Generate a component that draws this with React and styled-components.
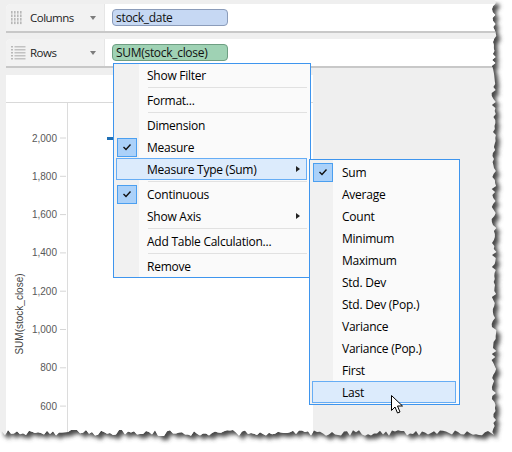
import React from "react";
import styled, { createGlobalStyle } from "styled-components";

const GlobalStyle = createGlobalStyle`
  html, body {
    margin: 0;
    padding: 0;
    background: #ffffff;
  }
  body {
    font-family: "Open Sans", "Noto Sans", sans-serif;
  }
`;

// torn paper edge of the screenshot (right + bottom)
const EDGE_X = 494;
const EDGE_Y = 433;

const makeRand = (seed) => {
  let s = seed;
  return () => {
    s = (s * 9301 + 49297) % 233280;
    return s / 233280;
  };
};

const rnd = makeRand(11);
const tornPts = [[0, 0]];
for (let y = 0; y <= EDGE_Y; y += 3) tornPts.push([EDGE_X + (rnd() - 0.5) * 5, y]);
for (let x = EDGE_X; x >= 0; x -= 3) tornPts.push([x, EDGE_Y + (rnd() - 0.5) * 6]);
tornPts.push([0, EDGE_Y]);

const clipPoints = tornPts.map(([x, y]) => `${x.toFixed(1)}px ${y.toFixed(1)}px`).join(", ");
const shadowPoints = tornPts.map(([x, y]) => `${(x + 4).toFixed(1)},${(y + 4).toFixed(1)}`).join(" ");

const mainMenu = [
  { label: "Show Filter" },
  { sep: true },
  { label: "Format..." },
  { sep: true },
  { label: "Dimension" },
  { label: "Measure", checked: true },
  { label: "Measure Type (Sum)", sub: true, active: true },
  { sep: true },
  { label: "Continuous", checked: true },
  { label: "Show Axis", sub: true },
  { sep: true },
  { label: "Add Table Calculation..." },
  { sep: true },
  { label: "Remove" },
];

const subMenu = [
  { label: "Sum", checked: true },
  { label: "Average" },
  { label: "Count" },
  { label: "Minimum" },
  { label: "Maximum" },
  { label: "Std. Dev" },
  { label: "Std. Dev (Pop.)" },
  { label: "Variance" },
  { label: "Variance (Pop.)" },
  { label: "First" },
  { label: "Last", active: true },
];

const ticks = [2000, 1800, 1600, 1400, 1200, 1000, 800, 600];

const ColumnsGrip = () => (
  <svg width="15" height="15" viewBox="0 0 15 15">
    {[0, 3, 6, 9].map((x) =>
      [0, 3.5, 7, 10.5].map((y) => (
        <rect key={`${x}-${y}`} x={x} y={y + 1} width="1.6" height="2.6" fill="#b8b8b8" />
      ))
    )}
  </svg>
);

const RowsGrip = () => (
  <svg width="15" height="15" viewBox="0 0 15 15">
    {[0, 3, 6, 9, 12].map((y) => (
      <g key={y}>
        <rect x="0" y={y + 1} width="2" height="1.5" fill="#b8b8b8" />
        <rect x="3.5" y={y + 1} width="11" height="1.5" fill="#c2c2c2" />
      </g>
    ))}
  </svg>
);

const CheckMark = () => (
  <svg width="10" height="8" viewBox="0 0 10 8">
    <path d="M1.5 4 L4 6.5 L8.5 1.5" fill="none" stroke="#111" strokeWidth="1.4" />
  </svg>
);

const Cursor = () => (
  <svg width="13" height="20" viewBox="0 0 13 20">
    <path
      d="M0.5 0.5 L0.5 15.5 L4 12 L6.5 18 L9 17 L6.5 11 L11.5 11 Z"
      fill="#ffffff"
      stroke="#000000"
      strokeWidth="1"
      strokeLinejoin="round"
    />
  </svg>
);

const Menu = ({ items, left, top, width, gutter, rowHeight, textLeft, pad }) => (
  <MenuBox $left={left} $top={top} $width={width} $gutter={gutter} $pad={pad}>
    {items.map((it, i) =>
      it.sep ? (
        <Separator key={i} $textLeft={textLeft} />
      ) : (
        <MenuItem key={i} $active={it.active} $h={rowHeight}>
          <ItemGutter $w={textLeft}>
            {it.checked && (
              <CheckBox>
                <CheckMark />
              </CheckBox>
            )}
          </ItemGutter>
          <ItemLabel>{it.label}</ItemLabel>
          {it.sub && <SubArrow />}
        </MenuItem>
      )
    )}
  </MenuBox>
);

const Axis = () => (
  <svg width="61" height="340" viewBox="0 0 61 340">
    {ticks.map((v, i) => {
      const y = 35 + i * 38.3;
      return (
        <g key={v}>
          <line x1="54" x2="60" y1={y} y2={y} stroke="#d6d6d6" strokeWidth="1" />
          <text
            x="51"
            y={y + 3.5}
            textAnchor="end"
            fontFamily="'Liberation Sans', Arial, sans-serif"
            fontSize="10"
            fill="#595959"
          >
            {v.toLocaleString("en-US")}
          </text>
        </g>
      );
    })}
    <text
      transform="translate(16.5 211) rotate(-90)"
      textAnchor="middle"
      fontFamily="'Liberation Sans', Arial, sans-serif"
      fontSize="10"
      fill="#444"
    >
      SUM(stock_close)
    </text>
  </svg>
);

export default function App() {
  return (
    <Page>
      <GlobalStyle />
      <EdgeShadow width="512" height="452">
        <defs>
          <filter id="blur" x="-5%" y="-5%" width="110%" height="110%">
            <feGaussianBlur stdDeviation="2.2" />
          </filter>
        </defs>
        <polygon points={shadowPoints} fill="#4a4a4a" filter="url(#blur)" />
      </EdgeShadow>
      <Screen>
        <Shelf>
          <ShelfLabel>
            <ColumnsGrip />
            <ShelfName>Columns</ShelfName>
            <DropTriangle />
          </ShelfLabel>
          <ShelfBody>
            <Pill $kind="dimension">stock_date</Pill>
          </ShelfBody>
        </Shelf>
        <Shelf>
          <ShelfLabel>
            <RowsGrip />
            <ShelfName>Rows</ShelfName>
            <DropTriangle />
          </ShelfLabel>
          <ShelfBody>
            <Pill $kind="measure">SUM(stock_close)</Pill>
          </ShelfBody>
        </Shelf>

        <Workspace>
          <Pane>
            <PaneHeader />
            <PaneBody>
              <AxisColumn>
                <Axis />
              </AxisColumn>
              <Plot>
                <Mark />
              </Plot>
            </PaneBody>
          </Pane>
          <Filler />
        </Workspace>

        <Menu items={mainMenu} left={113} top={63} width={198} gutter={25} rowHeight={22} textLeft={30} pad={0} />
        <Menu items={subMenu} left={309} top={159} width={151} gutter={23} rowHeight={22} textLeft={29} pad={1} />
        <CursorSpot>
          <Cursor />
        </CursorSpot>
      </Screen>
    </Page>
  );
}

const Page = styled.div`
  position: relative;
  width: 512px;
  height: 452px;
  overflow: hidden;
  background: #ffffff;
`;

const EdgeShadow = styled.svg`
  position: absolute;
  left: 0;
  top: 0;
`;

const Screen = styled.div`
  position: relative;
  width: 500px;
  height: 440px;
  padding-top: 4px;
  box-sizing: border-box;
  background: #efefef;
  clip-path: polygon(${clipPoints});
  display: flex;
  flex-direction: column;
`;

const Shelf = styled.div`
  display: flex;
  height: 27px;
  margin-left: 6px;
  margin-bottom: 6px;
  background: #ffffff;
  border-bottom: 2px solid #c8c8c8;
  border-top-left-radius: 5px;
  overflow: hidden;
  flex-shrink: 0;
`;

const ShelfLabel = styled.div`
  width: 99px;
  display: flex;
  align-items: center;
  padding-left: 5px;
  box-sizing: border-box;
  background: #f2f2f2;
  border-right: 1px solid #e6e6e6;
`;

const ShelfName = styled.span`
  margin-left: 4px;
  font-size: 11.5px;
  color: #1e1e1e;
  letter-spacing: -0.5px;
`;

const DropTriangle = styled.span`
  margin-left: auto;
  margin-right: 8px;
  width: 0;
  height: 0;
  border-left: 3.5px solid transparent;
  border-right: 3.5px solid transparent;
  border-top: 4px solid #7c7c7c;
`;

const ShelfBody = styled.div`
  flex: 1;
  display: flex;
  align-items: center;
  padding-left: 7px;
`;

const Pill = styled.div`
  width: 116px;
  height: 17px;
  box-sizing: border-box;
  padding-left: 3px;
  display: flex;
  align-items: center;
  border-radius: 4px;
  font-size: 12px;
  letter-spacing: -0.3px;
  color: #111;
  background: ${(p) => (p.$kind === "measure" ? "#9fd2b4" : "#c6d8f3")};
  border: 1px solid ${(p) => (p.$kind === "measure" ? "#6e9e82" : "#8b9cba")};
`;

const Workspace = styled.div`
  flex: 1;
  display: flex;
  margin-top: 1px;
`;

const Pane = styled.div`
  width: 307px;
  margin-left: 6px;
  background: #ffffff;
  display: flex;
  flex-direction: column;
`;

const PaneHeader = styled.div`
  height: 27px;
  border-bottom: 1px solid #d9d9d9;
  flex-shrink: 0;
`;

const PaneBody = styled.div`
  flex: 1;
  display: flex;
`;

const AxisColumn = styled.div`
  width: 61px;
  border-right: 1px solid #dcdcdc;
  overflow: hidden;
`;

const Plot = styled.div`
  flex: 1;
  position: relative;
`;

const Mark = styled.div`
  position: absolute;
  left: 39px;
  top: 34px;
  width: 7px;
  height: 3px;
  background: #1f6fb4;
`;

const Filler = styled.div`
  flex: 1;
`;

const MenuBox = styled.div`
  position: absolute;
  left: ${(p) => p.$left}px;
  top: ${(p) => p.$top}px;
  width: ${(p) => p.$width}px;
  box-sizing: border-box;
  padding: ${(p) => p.$pad}px 0;
  border: 1px solid #3e95ee;
  background: linear-gradient(
    to right,
    #f1f1f1 0,
    #f1f1f1 ${(p) => p.$gutter}px,
    #fafafa ${(p) => p.$gutter}px
  );
  font-size: 12px;
  letter-spacing: -0.25px;
  color: #000;
`;

const MenuItem = styled.div`
  height: ${(p) => p.$h}px;
  margin: 0 3px 0 2px;
  box-sizing: border-box;
  display: flex;
  align-items: center;
  border: 1px solid ${(p) => (p.$active ? "#66adf5" : "transparent")};
  background: ${(p) => (p.$active ? "#dcebfc" : "transparent")};
`;

const ItemGutter = styled.div`
  width: ${(p) => p.$w}px;
  height: 100%;
  display: flex;
  align-items: center;
  flex-shrink: 0;
`;

const CheckBox = styled.div`
  width: 20px;
  height: 19px;
  box-sizing: border-box;
  border: 1px solid #4b9ff0;
  background: #abd1f9;
  display: flex;
  align-items: center;
  justify-content: center;
`;

const ItemLabel = styled.span`
  white-space: nowrap;
`;

const SubArrow = styled.span`
  margin-left: auto;
  margin-right: 6px;
  width: 0;
  height: 0;
  border-top: 3.5px solid transparent;
  border-bottom: 3.5px solid transparent;
  border-left: 4px solid #222;
`;

const Separator = styled.div`
  height: 3px;
  display: flex;
  align-items: center;
  padding-left: ${(p) => p.$textLeft + 4}px;
  padding-right: 3px;

  &::after {
    content: "";
    flex: 1;
    height: 1px;
    background: #e1e1e1;
  }
`;

const CursorSpot = styled.div`
  position: absolute;
  left: 391px;
  top: 395px;
  width: 13px;
  height: 20px;
`;
